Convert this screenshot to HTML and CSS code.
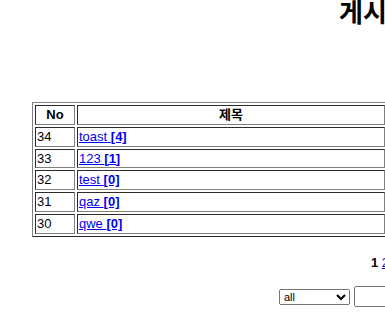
FILE: index.html
```html
<!DOCTYPE html>
<html lang="ko">
<head>
    <meta charset="UTF-8">
    <meta name="viewport" content="width=device-width, initial-scale=1.0">
    <title>게시판</title>
    <link rel="stylesheet" href="styles.css">
</head>
<body>
    <div class="page">
        <h2 class="title">게시판</h2>

        <table class="board" border="1">
            <tr>
                <th class="col-no">No</th>
                <th class="col-title">제목</th>
                <th>작성자</th>
                <th>작성일</th>
                <th>조회</th>
            </tr>
            <tr>
                <td>34</td>
                <td><a href="#">toast <b>[4]</b></a></td>
                <td>admin</td>
                <td>2019-05-02</td>
                <td>12</td>
            </tr>
            <tr>
                <td>33</td>
                <td><a href="#">123 <b>[1]</b></a></td>
                <td>admin</td>
                <td>2019-05-02</td>
                <td>5</td>
            </tr>
            <tr>
                <td>32</td>
                <td><a href="#">test <b>[0]</b></a></td>
                <td>admin</td>
                <td>2019-05-01</td>
                <td>3</td>
            </tr>
            <tr>
                <td>31</td>
                <td><a href="#">qaz <b>[0]</b></a></td>
                <td>admin</td>
                <td>2019-05-01</td>
                <td>2</td>
            </tr>
            <tr>
                <td>30</td>
                <td><a href="#">qwe <b>[0]</b></a></td>
                <td>admin</td>
                <td>2019-05-01</td>
                <td>1</td>
            </tr>
        </table>

        <div class="paging">
            <b>1</b> <a href="#">2</a>
        </div>

        <form class="search">
            <select name="type">
                <option>all</option>
                <option>제목</option>
                <option>내용</option>
            </select>
            <input type="text" name="keyword">
            <button type="button">검색</button>
        </form>
    </div>
</body>
</html>
```

FILE: styles.css
```css
html, body {
    overflow: hidden;
}
body {
    margin: 0;
    font-family: "Liberation Sans", "Noto Sans CJK KR", sans-serif;
    font-size: 13px;
    color: black;
}
.page {
    width: 750px;
}
.title {
    margin: 0;
    font-size: 26px;
    line-height: 26px;
    text-align: center;
}
.board {
    width: 686px;
    margin: 76px auto 0;
}
.board th,
.board td {
    line-height: 15.75px;
}
.col-no {
    width: 36px;
}
.col-title {
    width: 304px;
}
.board td {
    text-align: left;
}
.paging {
    text-align: center;
    margin-top: 18px;
    padding-left: 10px;
}
.search {
    text-align: center;
    margin-top: 15px;
}
.search select {
    width: 71px;
    font-size: 11px;
}
.search input {
    width: 64px;
}
```
